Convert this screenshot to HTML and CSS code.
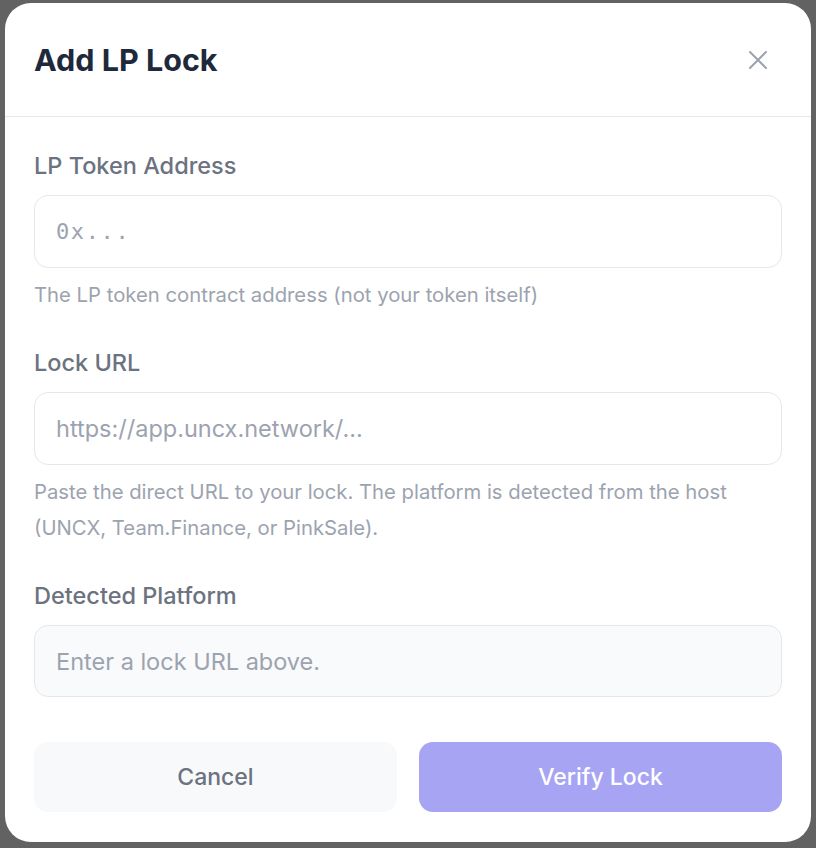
FILE: index.html
```html
<!DOCTYPE html>
<html lang="en">
<head>
  <meta charset="UTF-8">
  <meta name="viewport" content="width=device-width, initial-scale=1">
  <title>Add LP Lock</title>
  <link rel="stylesheet" href="styles.css">
</head>
<body>
  <div class="modal">
    <div class="modal-header">
      <h2>Add LP Lock</h2>
      <button class="close-btn" aria-label="Close">
        <svg width="24" height="24" viewBox="0 0 24 24" fill="none" stroke="currentColor" stroke-width="2" stroke-linecap="round">
          <path d="M4 4L20 20M20 4L4 20"/>
        </svg>
      </button>
    </div>

    <div class="modal-body">
      <div class="field">
        <label for="lpToken">LP Token Address</label>
        <input id="lpToken" class="input mono" type="text" placeholder="0x...">
        <p class="hint">The LP token contract address (not your token itself)</p>
      </div>

      <div class="field">
        <label for="lockUrl">Lock URL</label>
        <input id="lockUrl" class="input" type="text" placeholder="https://app.uncx.network/...">
        <p class="hint">Paste the direct URL to your lock. The platform is detected from the host (UNCX, Team.Finance, or PinkSale).</p>
      </div>

      <div class="field">
        <label>Detected Platform</label>
        <div class="input readonly">Enter a lock URL above.</div>
      </div>

      <div class="actions">
        <button class="btn btn-cancel">Cancel</button>
        <button class="btn btn-verify" disabled>Verify Lock</button>
      </div>
    </div>
  </div>
</body>
</html>
```

FILE: styles.css
```css
body {
  margin: 0;
  background: #626262;
  font-family: Inter, "Noto Sans", sans-serif;
  display: flex;
  justify-content: center;
  padding-top: 3px;
  min-height: 848px;
  box-sizing: border-box;
}

.modal {
  width: 806px;
  height: 839px;
  background: #fff;
  border-radius: 26px;
  overflow: hidden;
}

.modal-header {
  height: 113px;
  display: flex;
  align-items: center;
  justify-content: space-between;
  padding: 0 29px;
  border-bottom: 1px solid #e5e7eb;
}
.modal-header h2 {
  margin: 0;
  font-size: 30.5px;
  font-weight: 700;
  color: #1e293b;
}
.close-btn {
  background: none;
  border: none;
  padding: 0;
  margin-right: 12px;
  color: #9ca3af;
  cursor: pointer;
  display: flex;
}

.modal-body {
  padding: 33px 29px 30px;
  display: flex;
  flex-direction: column;
  gap: 34px;
}

.field {
  display: flex;
  flex-direction: column;
}
.field label {
  font-size: 23.5px;
  line-height: 32px;
  font-weight: 500;
  color: #6b7280;
  margin-bottom: 13px;
}

.input {
  box-sizing: border-box;
  width: 100%;
  height: 73px;
  border: 1px solid #e5e7eb;
  border-radius: 14px;
  padding: 0 21px;
  font-family: inherit;
  font-size: 23.5px;
  color: #374151;
  background: #fff;
  outline: none;
}
.input::placeholder {
  color: #9ca3af;
}
.input.mono {
  font-family: "DejaVu Sans Mono", "Liberation Mono", monospace;
  font-size: 22px;
  letter-spacing: 1.6px;
}
.input.readonly {
  height: 72px;
  display: flex;
  align-items: center;
  background: #f9fafb;
  color: #9ca3af;
}

.hint {
  margin: 9px 0 0;
  font-size: 20.3px;
  line-height: 36px;
  color: #9ca3af;
}

.actions {
  display: grid;
  grid-template-columns: 1fr 1fr;
  gap: 22px;
  margin-top: 11px;
}
.btn {
  height: 70px;
  border: none;
  border-radius: 14px;
  font-family: inherit;
  font-size: 23px;
  font-weight: 500;
  cursor: pointer;
}
.btn-cancel {
  background: #f8f9fb;
  color: #6b7280;
}
.btn-verify {
  background: #a7a4f3;
  color: #fff;
}
```
